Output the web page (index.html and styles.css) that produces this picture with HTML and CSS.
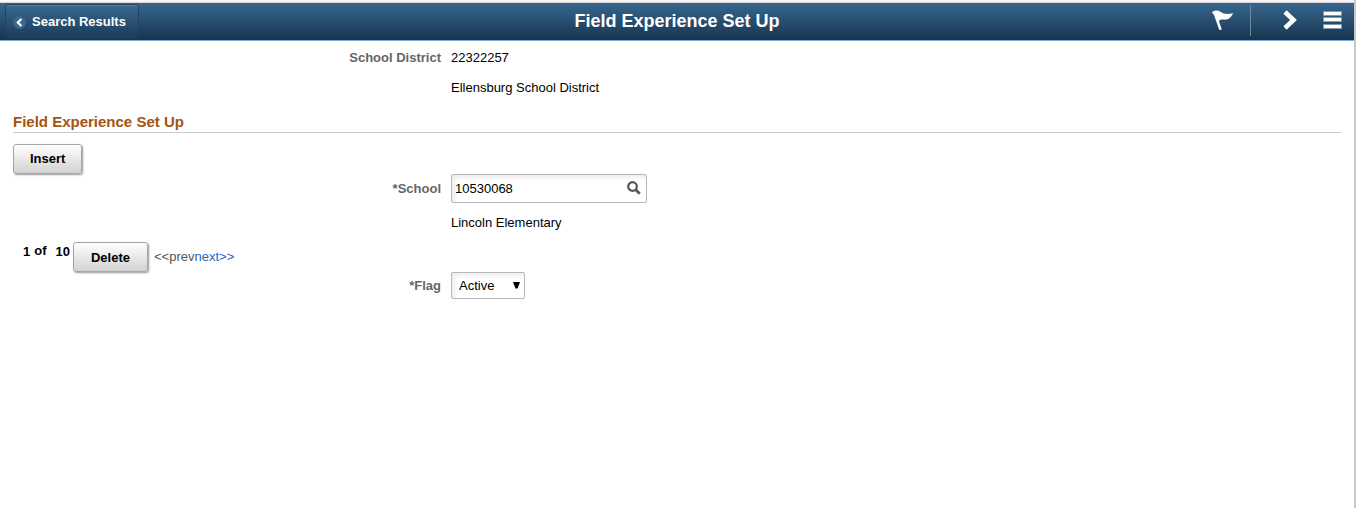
FILE: index.html
```html
<!DOCTYPE html>
<html lang="en">
<head>
<meta charset="utf-8">
<title>Field Experience Set Up</title>
<link rel="stylesheet" href="styles.css">
</head>
<body>
<header class="banner">
  <button class="back" type="button">
    <svg class="back-icon" viewBox="0 0 14 14" aria-hidden="true"><circle cx="7" cy="7" r="7" fill="#3a698f"/><path d="M9 3.200 5.200 7 9 10.800" fill="none" stroke="#fff" stroke-width="2.400"/></svg>
    Search Results
  </button>
  <h1 class="banner-title">Field Experience Set Up</h1>
  <nav class="tools">
    <button class="tool tool-flag" type="button" aria-label="Notifications">
      <svg width="24" height="22" viewBox="0 0 24 22"><path d="M1 3C3.500 1 6.500 .8 9.500 2.800C13 5.200 17 5.800 22 4C20.500 8.500 17 11.200 12.500 10.600C10 10.200 8.500 10.800 8 12L10.800 20.800H8.200L3 6C2.400 4.800 1.300 4.300 1 3Z" fill="#fff"/></svg>
    </button>
    <button class="tool tool-next" type="button" aria-label="Actions">
      <svg width="14" height="20" viewBox="0 0 14 20"><path d="M2 2l8.500 8L2 18" fill="none" stroke="#fff" stroke-width="4.600"/></svg>
    </button>
    <button class="tool" type="button" aria-label="Menu">
      <svg width="19" height="18" viewBox="0 0 19 18"><path d="M0 0h19v5H0zM0 6h19v5H0zM0 13h19v5H0z" fill="#7f9ab0"/><path d="M1 1h17v3H1zM1 7h17v3H1zM1 14h17v3H1z" fill="#fff"/></svg>
    </button>
  </nav>
</header>
<main class="content">
  <dl class="row district">
    <dt class="label">School District</dt>
    <dd class="value">22322257</dd>
    <dd class="value">Ellensburg School District</dd>
  </dl>
  <h2 class="section-title">Field Experience Set Up</h2>
  <button class="button" type="button">Insert</button>
  <div class="row">
    <label class="label" for="school">*School</label>
    <div class="lookup">
      <input class="lookup-input" id="school" type="text" value="10530068">
      <button class="lookup-button" type="button" aria-label="Look up school">
        <svg width="14" height="14" viewBox="0 0 14 14"><circle cx="5.500" cy="5.500" r="4.300" fill="none" stroke="#555" stroke-width="2.200"/><path d="M8.500 8.500l4.200 4.200" stroke="#555" stroke-width="2.800"/></svg>
      </button>
    </div>
    <p class="value school-name">Lincoln Elementary</p>
  </div>
  <div class="pager">
    <span class="count"><b>1</b> <b class="count-of">of</b> <b class="count-total">10</b></span>
    <button class="button" type="button">Delete</button>
    <span class="steps">&lt;&lt;prev<a class="next" href="#next">next&gt;&gt;</a></span>
  </div>
  <div class="row">
    <label class="label" for="flag">*Flag</label>
    <div class="picker">
      <select class="flag-select" id="flag"><option>Active</option><option>Inactive</option></select>
      <svg class="picker-arrow" width="7" height="7" viewBox="0 0 7 7" aria-hidden="true"><path d="M0 0h7L4.500 6.500h-2z" fill="#000"/></svg>
    </div>
  </div>
</main>
</body>
</html>
```
FILE: styles.css
```css
* { box-sizing: border-box; }

body {
  margin: 0;
  min-height: 100vh;
  border-right: 2px solid #c8c8c8;
  background: #fff;
  color: #000;
  font: 13px/20px "Liberation Sans", Arial, sans-serif;
}

button, input, select { font: inherit; color: inherit; }

.banner {
  display: grid;
  grid-template-columns: 1fr auto 1fr;
  align-items: center;
  height: 41px;
  border-top: 2px solid #f8f6f6;
  border-bottom: 1px solid #7eacd8;
  background: linear-gradient(#386890, #18344f);
  box-shadow: inset 0 1px #d8d2d4;
  color: #fff;
}

.back {
  display: flex;
  align-items: center;
  justify-self: start;
  gap: 6px;
  height: 34px;
  margin-left: 5px;
  padding: 2px 12px 0 7px;
  border: 1px solid #1f4362;
  border-radius: 3px;
  background: linear-gradient(#386890, #1c3c59);
  box-shadow: inset 0 1px #4e82aa;
  font-weight: bold;
}

.back-icon { width: 13px; height: 13px; }

.banner-title {
  margin: 0;
  font-size: 18px;
  line-height: 24px;
}

.tools {
  display: flex;
  align-items: center;
  justify-self: end;
  padding: 0 12px 2px 0;
}

.tool {
  display: flex;
  padding: 0;
  border: 0;
  background: none;
}

.tool-flag {
  align-items: center;
  height: 31px;
  padding-right: 15px;
  border-right: 1px solid #6d8ba5;
}

.tool-next { margin: 0 26px 0 32px; }

.content { padding: 7px 13px 0; }

.row {
  display: grid;
  grid-template-columns: 428px 1fr;
  align-items: center;
  column-gap: 10px;
  margin: 0;
}

.label {
  color: #666;
  font-weight: bold;
  text-align: right;
}

.value { grid-column: 2; margin: 0; }

.district { row-gap: 10px; }

.section-title {
  margin: 14px 0 11px;
  border-bottom: 1px solid #ccc;
  color: #a35412;
  font-size: 15px;
  line-height: 20px;
}

.button {
  display: block;
  height: 30px;
  padding: 0 16px;
  border: 1px solid #a5a5a5;
  border-radius: 3px;
  background: linear-gradient(#fff, #d2d2d2);
  box-shadow: 1px 1px 2px #999;
  font-weight: bold;
}

.lookup {
  display: flex;
  align-items: center;
  width: 196px;
  height: 29px;
  border: 1px solid #b8b8b8;
  border-radius: 2px;
  box-shadow: inset 3px 3px 4px #eee;
}

.lookup-input {
  flex: 1;
  min-width: 0;
  padding: 0 0 0 3px;
  border: 0;
  outline: 0;
  background: none;
}

.lookup-button {
  display: flex;
  padding: 0 5px 2px 0;
  border: 0;
  background: none;
}

.school-name { margin-top: 10px; }

.pager {
  display: flex;
  align-items: center;
  gap: 6px;
  margin-top: 9px;
  padding-left: 10px;
}

.count {
  display: flex;
  gap: 4px;
  margin: 0 -3px 10px 0;
}

.count-of { margin-top: -1px; }
.count-total { margin-left: 5px; }

.pager .button { padding: 1px 17px 0; }

.steps { color: #555; }
.next { color: #2a62c5; text-decoration: none; }

.picker {
  display: flex;
  position: relative;
  width: 74px;
}

.flag-select {
  width: 100%;
  height: 27px;
  padding: 1px 7px 0;
  appearance: none;
  border: 1px solid #b8b8b8;
  border-radius: 2px;
  background: #fff;
  box-shadow: inset 3px 3px 4px #eee;
}

.picker-arrow {
  position: absolute;
  top: 10px;
  right: 5px;
  pointer-events: none;
}
```
